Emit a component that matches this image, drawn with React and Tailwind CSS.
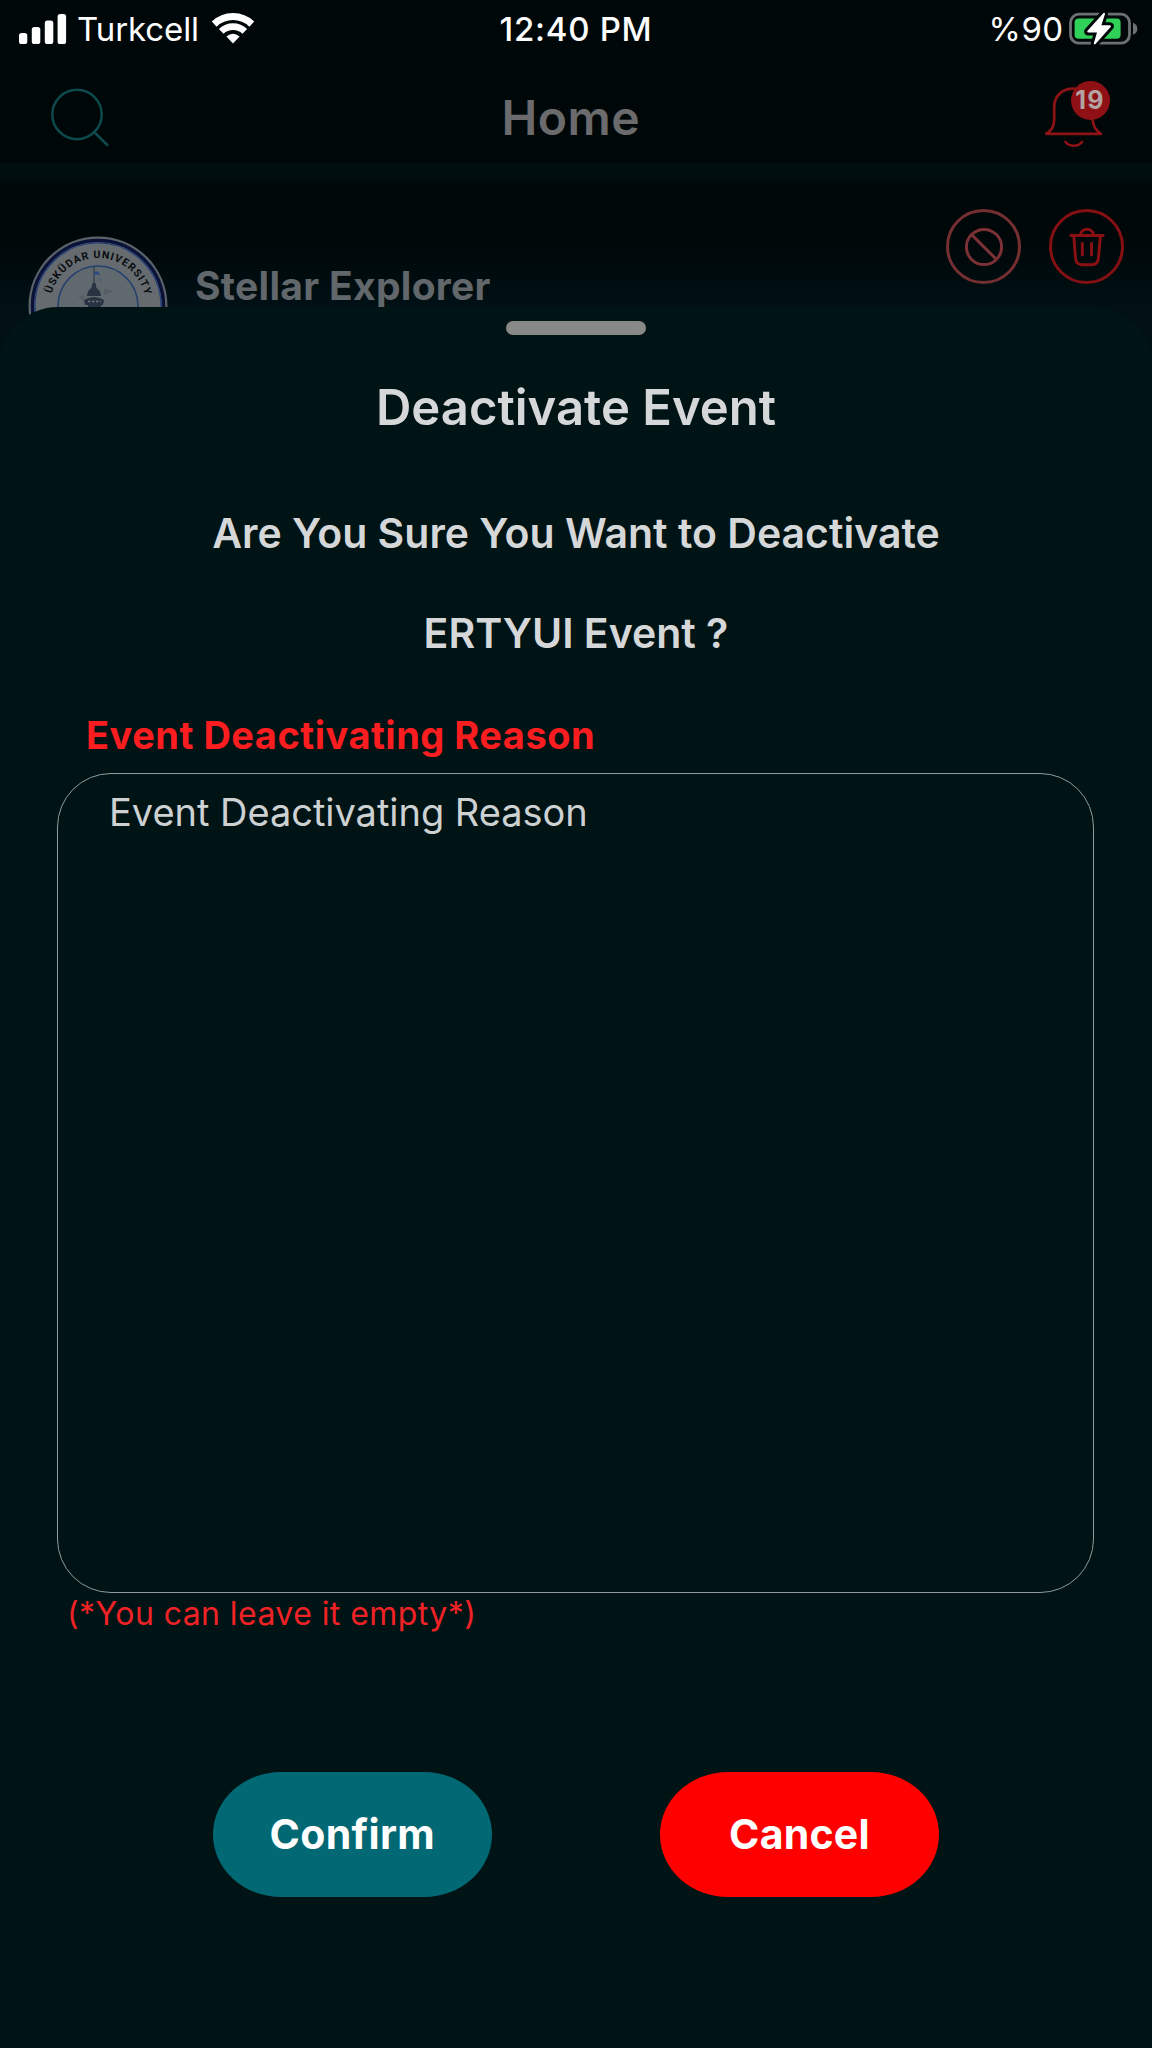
const FONT = "font-['Inter','Liberation_Sans',sans-serif]";

function SignalIcon() {
  return (
    <svg className="block h-[32px] w-[48px]" viewBox="0 0 48 32" fill="#fff">
      <rect x="0" y="20" width="8.3" height="11" rx="2.6" />
      <rect x="12.8" y="14" width="8.5" height="17" rx="2.6" />
      <rect x="25.8" y="7.4" width="8.5" height="23.6" rx="2.6" />
      <rect x="38.6" y="1" width="8.5" height="30" rx="2.6" />
    </svg>
  );
}

function WifiIcon() {
  return (
    <svg className="block h-[32px] w-[44px]" viewBox="0 0 44 32" fill="none">
      <path d="M3.2 11.1A27.2 27.2 0 0 1 40.8 11.1" stroke="#fff" strokeWidth="7" />
      <path d="M10.2 18.4A17.2 17.2 0 0 1 33.8 18.4" stroke="#fff" strokeWidth="6.8" />
      <path d="M22 30.500L15.4 23.5Q22 18 28.6 23.5Z" fill="#fff" />
    </svg>
  );
}

function BatteryIcon() {
  return (
    <svg className="block h-[36px] w-[70px]" viewBox="0 0 70 36" fill="none">
      <rect x="2.5" y="3.2" width="59" height="29" rx="8.5" stroke="#6d7171" strokeWidth="2.8" />
      <path d="M65 11.7c2.8 1 4.4 3.2 4.4 6s-1.6 5-4.4 6z" fill="#6d7171" />
      <rect x="6.6" y="7.500" width="46" height="20.3" rx="4" fill="#30d158" />
      <path
        d="M35.5 2.100L19.3 20.100Q18.8 21.500 20.3 21.500H29L25.8 32.300Q26 34.100 27.5 33L42.8 15.800Q43.3 14.300 41.8 14.300H33.4L37 3.100Q36.8 1.100 35.5 2.100Z"
        fill="#fff" stroke="#000708" strokeWidth="6" strokeLinejoin="round" paintOrder="stroke"
      />
    </svg>
  );
}

function StatusBar() {
  return (
    <div className="grid h-[58px] grid-cols-3 items-center text-[33px] leading-[58px] text-white">
      <div className="flex items-center pl-[18.5px]">
        <SignalIcon />
        <span className="ml-[10.5px] tracking-[-0.1px]">Turkcell</span>
        <span className="ml-[12px]"><WifiIcon /></span>
      </div>
      <div className="text-center font-medium tracking-[0.72px]">12:40 PM</div>
      <div className="flex items-center justify-end pr-[14px]">
        <span className="tracking-[0.4px]">%90</span>
        <span className="ml-[4.5px]"><BatteryIcon /></span>
      </div>
    </div>
  );
}

function SearchIcon() {
  return (
    <svg className="block h-[60px] w-[60px]" viewBox="0 0 60 60" fill="none" stroke="#0d4a4e" strokeWidth="2.5">
      <circle cx="26" cy="26.5" r="24.7" />
      <path d="M43.2 44L56.3 57" strokeLinecap="round" />
    </svg>
  );
}

function BellIcon() {
  return (
    <div className="relative h-[68px] w-[66px]">
      <svg className="block h-[68px] w-[60px]" viewBox="0 0 60 68" fill="none" stroke="#8e1216" strokeWidth="2.7" strokeLinecap="round" strokeLinejoin="round">
        <path d="M2.2 52.8H57C51.5 49.5 49.200 45.5 48.700 39V26C48.700 14 41 7.7 29.700 7.7C18 7.7 10.200 15 10.200 26V39C10 46 7.500 50 2.200 52.8Z" />
        <path d="M21.500 61C25.500 66 34 66 38 61" />
      </svg>
      <span className="absolute left-[26.500px] top-0 flex h-[39px] w-[39px] items-center justify-center rounded-full bg-[#8f1115] text-[25px] font-bold leading-none tracking-[1.200px] text-[#b3a3a1]">
        <span className="-mt-px">19</span>
      </span>
    </div>
  );
}

function BanIcon() {
  return (
    <div className="flex h-[75px] w-[75px] items-center justify-center rounded-full border-[3px] border-[#752f33]">
      <svg className="block h-[40px] w-[40px]" viewBox="0 0 40 40" fill="none" stroke="#7b3135" strokeWidth="3">
        <circle cx="20" cy="20" r="17.6" />
        <path d="M7.6 7.6L32.4 32.4" />
      </svg>
    </div>
  );
}

function TrashIcon() {
  return (
    <div className="flex h-[75px] w-[75px] items-center justify-center rounded-full border-[3px] border-[#841014]">
      <svg className="block h-[40px] w-[36px]" viewBox="0 0 36 40" fill="none" stroke="#8a1014" strokeWidth="2.9" strokeLinecap="round" strokeLinejoin="round">
        <path d="M1.8 8.5H34.2M4.8 9L6.6 31.5Q7.2 37.7 13 37.7H23Q28.8 37.7 29.4 31.5L31.4 9" />
        <path d="M11.5 8C12.2 0.3 23.8 0.3 24.5 8M13.3 16.5V28M22.5 16.5V28" />
      </svg>
    </div>
  );
}

function UniversitySeal() {
  return (
    <svg className="block h-[140px] w-[140px]" viewBox="0 0 140 140">
      <defs>
        <path id="seal-arc" d="M22 70A48 48 0 0 1 118 70" />
      </defs>
      <circle cx="70" cy="70" r="69.5" fill="#5b6369" />
      <circle cx="70" cy="70" r="65.5" fill="#656b6f" stroke="#0a1238" strokeWidth="3.5" />
      <circle cx="70" cy="70" r="63" fill="none" stroke="#24407c" strokeWidth="1.2" />
      <circle cx="70" cy="70" r="40" fill="#60696d" stroke="#243f70" strokeWidth="1.6" />
      <text className="font-['Roboto','Liberation_Sans',sans-serif] font-bold" fontSize="10.5" fill="#090c10">
        <textPath href="#seal-arc" startOffset="12.5" textLength="127" lengthAdjust="spacing">ÜSKÜDAR UNIVERSITY</textPath>
      </text>
      <g fill="#293242">
        <path d="M65.5 31H66.5V50H65.5Z" />
        <path d="M66.5 36Q69.5 34 72 38V40Q69.5 37.5 66.5 39.5Z" fill="#294a83" />
        <path d="M64.5 47H67.5L68.5 52Q72.5 54 73 60H59Q59.5 54 63.5 52Z" />
        <path d="M56 64Q66 58 76 64L75 69H57Z" />
        <path d="M60 69H73V76H60Z" />
      </g>
      <path d="M60 65.5H73" stroke="#697276" strokeWidth="1.5" strokeDasharray="2.5 1.5" />
      <path d="M70 44l4-2-1 3z" fill="#4c5d78" />
      <path d="M76 53L86 55L76 59ZM50 61L56 59V64Z" fill="#555e64" />
    </svg>
  );
}

function HomeBackdrop() {
  return (
    <div className="h-[380px] bg-[#000708]">
      <StatusBar />
      <header className="flex h-[105px] items-start justify-between pl-[50.5px] pr-[42px]">
        <div className="w-[160px] pt-[29.5px]"><SearchIcon /></div>
        <h1 className="text-[48px] font-semibold leading-[120px] tracking-[0.5px] text-[#6b6b6d]">Home</h1>
        <div className="flex w-[179px] justify-end pt-[23px]"><BellIcon /></div>
      </header>
      <div className="flex h-[217px] bg-[linear-gradient(to_bottom,#000e0f_0px,#000d0e_15px,#000809_22px,#000708_70px,#000a0c_100px,#001014_140px)] pl-[28px] pr-[28px]">
        <div className="pt-[73px]"><UniversitySeal /></div>
        <div className="ml-[27px] mt-[93px] text-[39px] font-bold leading-[60px] tracking-[0.3px] text-[#62676b]">Stellar Explorer</div>
        <div className="ml-auto mt-[46px] flex gap-[28px]">
          <BanIcon />
          <TrashIcon />
        </div>
      </div>
    </div>
  );
}

function DeactivateSheet() {
  return (
    <section className="relative -mt-[73px] flex h-[1741px] flex-col rounded-t-[58px] bg-[#001315]">
      <div className="mx-auto mt-[14px] h-[14px] w-[140px] rounded-full bg-[#898989]" />
      <h2 className="mt-[38px] text-center text-[49px] font-semibold leading-[70px] text-[#d5d7d8]">Deactivate Event</h2>
      <p className="mt-[40px] text-center text-[41px] font-semibold leading-[100px] text-[#d5d7d8]">
        Are You Sure You Want to Deactivate
        <br />
        ERTYUI Event ?
      </p>
      <label className="mt-[22px] pl-[86px] text-[38px] font-bold leading-[60px] tracking-[0.5px] text-[#fb1d1f]">Event Deactivating Reason</label>
      <div className="ml-[57px] mr-[58px] mt-[8px] h-[820px] rounded-[54px] border border-[#929b9b] pl-[51px] pt-[8px] text-[38px] leading-[60px] tracking-[-0.03px] text-[#cdd1d2]">
        Event Deactivating Reason
      </div>
      <p className="pl-[67px] text-[32px] leading-[42px] tracking-[0.43px] text-[#ef2226]">(*You can leave it empty*)</p>
      <div className="mt-[136.5px] flex justify-between pl-[213px] pr-[213px]">
        <button className="h-[125px] w-[278.5px] rounded-[68px/62.5px] bg-[#026873] pt-px text-[41px] font-bold tracking-[0.3px] text-white">Confirm</button>
        <button className="h-[125px] w-[279px] rounded-[68px/62.5px] bg-[#ff0000] pt-px text-[41px] font-bold tracking-[0.25px] text-white">Cancel</button>
      </div>
    </section>
  );
}

export default function App() {
  return (
    <main className={`h-[2048px] w-[1152px] overflow-hidden bg-[#00090a] ${FONT}`}>
      <HomeBackdrop />
      <DeactivateSheet />
    </main>
  );
}
